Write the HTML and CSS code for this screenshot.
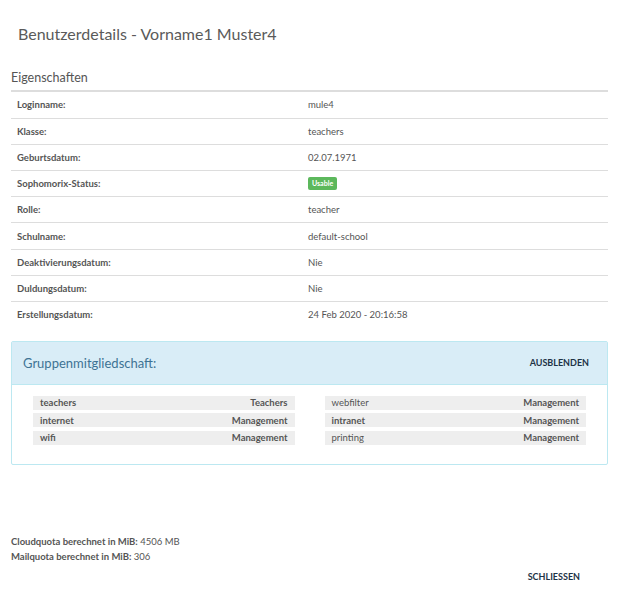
FILE: index.html
```html
<!DOCTYPE html>
<html>
<head>
<meta charset="utf-8">
<link rel="stylesheet" href="styles.css">
</head>
<body>
<div class="modal">
  <h1 class="title">Benutzerdetails - Vorname1 Muster4</h1>
  <h2 class="section">Eigenschaften</h2>
  <table class="props">
    <tr><th>Loginname:</th><td>mule4</td></tr>
    <tr><th>Klasse:</th><td>teachers</td></tr>
    <tr><th>Geburtsdatum:</th><td>02.07.1971</td></tr>
    <tr><th>Sophomorix-Status:</th><td><span class="badge">Usable</span></td></tr>
    <tr><th>Rolle:</th><td>teacher</td></tr>
    <tr><th>Schulname:</th><td>default-school</td></tr>
    <tr><th>Deaktivierungsdatum:</th><td>Nie</td></tr>
    <tr><th>Duldungsdatum:</th><td>Nie</td></tr>
    <tr><th>Erstellungsdatum:</th><td>24 Feb 2020 - 20:16:58</td></tr>
  </table>
  <div class="panel">
    <div class="panel-head">
      <span class="panel-title">Gruppenmitgliedschaft:</span>
      <span class="btn">AUSBLENDEN</span>
    </div>
    <div class="panel-body">
      <div class="glist">
        <div class="gitem"><b>teachers</b><span>Teachers</span></div>
        <div class="gitem"><b>internet</b><span>Management</span></div>
        <div class="gitem"><b>wifi</b><span>Management</span></div>
      </div>
      <div class="glist">
        <div class="gitem"><span class="n">webfilter</span><span>Management</span></div>
        <div class="gitem"><b>intranet</b><span>Management</span></div>
        <div class="gitem"><span class="n">printing</span><span>Management</span></div>
      </div>
    </div>
  </div>
  <div class="quota">
    <div><b>Cloudquota berechnet in MiB:</b> 4506 MB</div>
    <div><b>Mailquota berechnet in MiB:</b> 306</div>
  </div>
  <div class="footer"><span class="btn">SCHLIESSEN</span></div>
</div>
</body>
</html>
```
FILE: styles.css
```css
html, body { margin: 0; padding: 0; background: #fff; }
body { font-family: "Lato", "Open Sans", sans-serif; color: #555; }
.modal { padding: 0 11px; width: 597px; }
.title { font-size: 16px; font-weight: 400; margin: 0; padding: 25px 0 0 7px; height: 45px; box-sizing: border-box; color: #5a5a5a; line-height: 18px; }
.section { font-size: 12.5px; font-weight: 400; margin: 0; padding-top: 25px; line-height: 15px; padding-bottom: 5px; border-bottom: 2px solid #ddd; color: #555; }
.props { width: 100%; border-collapse: collapse; font-size: 9.5px; }
.props th, .props td { height: 26.2px; padding: 0 6px; text-align: left; border-top: 1px solid #ddd; vertical-align: middle; box-sizing: border-box; }
.props tr:first-child th, .props tr:first-child td { border-top: none; }
.props th { width: 291px; font-weight: 700; color: #555; }
.props td { color: #555; }
.badge { display: inline-block; background: #5cb85c; color: #fff; font-size: 7px; font-weight: 700; padding: 2px 4px; border-radius: 2px; line-height: 9px; }
.panel { margin-top: 13px; border: 1px solid #bce8f1; border-radius: 2px; }
.panel-head { background: #d9edf7; border-bottom: 1px solid #bce8f1; height: 42px; display: flex; align-items: center; justify-content: space-between; padding: 0 18px 0 11px; }
.panel-title { font-size: 13px; color: #3e7394; }
.btn { font-size: 9px; font-weight: 700; color: #1d3346; letter-spacing: 0; }
.panel-body { display: flex; gap: 30px; padding: 11px 21px 19px 21px; }
.glist { flex: 1; display: flex; flex-direction: column; gap: 3.5px; }
.gitem { background: #eee; height: 14px; display: flex; justify-content: space-between; align-items: center; padding: 0 7px; font-size: 9.5px; font-weight: 700; color: #555; }
.gitem b { font-weight: 700; }
.gitem .n { font-weight: 400; }
.gitem span:last-child { font-weight: 700; }
.quota { margin-top: 69px; font-size: 9.5px; line-height: 15px; color: #555; }
.quota b { font-weight: 700; }
.footer { display: flex; justify-content: flex-end; padding: 7px 28px 0 0; }
```
